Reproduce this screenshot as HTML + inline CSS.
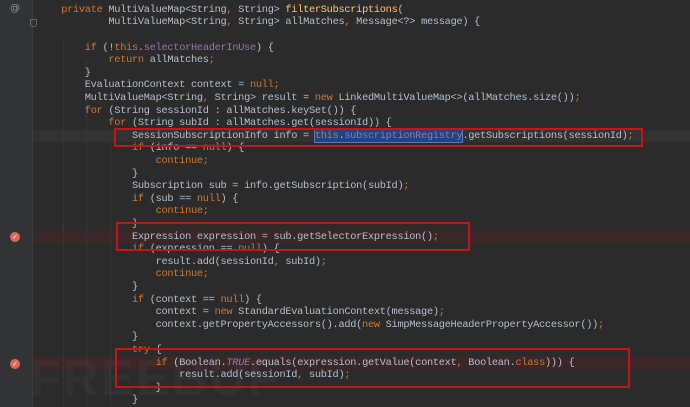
<!DOCTYPE html><html><head><style>
html{height:407px;overflow:hidden;background:#2b2b2b}
body{margin:0;width:690px;height:407px;background:#2b2b2b;overflow:hidden;position:relative;font-family:"Liberation Mono",monospace}
.g{position:absolute;left:0;top:0;width:32px;height:407px;background:#313335;border-right:1px solid #3c3c3c}
.l{position:absolute;left:37.6px;white-space:pre;font-size:10.3px;letter-spacing:-0.28px;line-height:12.6px;color:#b4bfcc;height:12.6px}
.k{color:#cc7832}.f{color:#9876aa}.m{color:#ffc66d}.i{color:#9876aa;font-style:italic}
.sel{background:#214283;outline:1px solid #5a7ab5}
.box{position:absolute;border:2px solid #c81414;box-sizing:border-box}
.bp{position:absolute;left:0;right:0;height:12.6px;background:#3a2828}
.ig{position:absolute;width:1px;background:#363636;bottom:0}
.dot{position:absolute;left:10px;width:10px;height:10px;border-radius:50%;background:#e0645a;color:#fff;font-size:7px;line-height:10px;text-align:center;font-family:"DejaVu Sans",sans-serif}
</style></head><body>
<div style="position:absolute;left:33px;right:0;top:129.5px;height:12.6px;background:#323232"></div>
<div class="bp" style="left:33px;top:230.3px"></div>
<div class="bp" style="left:33px;top:356.3px"></div>
<div class="g"></div>
<div class="ig" style="left:63px;top:40px"></div><div class="ig" style="left:86px;top:60px"></div><div class="ig" style="left:110px;top:140px"></div>
<div style="position:absolute;left:10px;top:3px;color:#999;font-size:10px;font-family:'DejaVu Sans',sans-serif">@</div>
<div style="position:absolute;left:30px;top:19px;width:5px;height:6px;border:1px solid #666;border-radius:0 0 3px 3px"></div>
<div class="dot" style="top:231.5px">✓</div>
<div class="dot" style="top:358.5px">✓</div>
<div style="position:absolute;left:30px;top:350px;height:57px;overflow:hidden;font:bold 50px/57px 'Liberation Sans',sans-serif;color:rgba(255,255,255,0.03);letter-spacing:2px">FREEBUF</div>
<div class="l" style="top:3.7px">    <span class="k">private</span> MultiValueMap&lt;String<span class="k">,</span> String&gt; <span class="m">filterSubscriptions</span>(</div>
<div class="l" style="top:16.3px">            MultiValueMap&lt;String<span class="k">,</span> String&gt; allMatches<span class="k">,</span> Message&lt;?&gt; message) {</div>
<div class="l" style="top:41.5px">        <span class="k">if</span> (!<span class="k">this</span>.<span class="f">selectorHeaderInUse</span>) {</div>
<div class="l" style="top:54.1px">            <span class="k">return</span> allMatches<span class="k">;</span></div>
<div class="l" style="top:66.7px">        }</div>
<div class="l" style="top:79.3px">        EvaluationContext context = <span class="k">null;</span></div>
<div class="l" style="top:91.9px">        MultiValueMap&lt;String<span class="k">,</span> String&gt; result = <span class="k">new</span> LinkedMultiValueMap&lt;&gt;(allMatches.size())<span class="k">;</span></div>
<div class="l" style="top:104.5px">        <span class="k">for</span> (String sessionId : allMatches.keySet()) {</div>
<div class="l" style="top:117.1px">            <span class="k">for</span> (String subId : allMatches.get(sessionId)) {</div>
<div class="l" style="top:129.7px">                SessionSubscriptionInfo info = <span class="sel"><span class="k">this</span>.<span class="f">subscriptionRegistry</span></span>.getSubscriptions(sessionId)<span class="k">;</span></div>
<div class="l" style="top:142.3px">                <span class="k">if</span> (info == <span class="k">null</span>) {</div>
<div class="l" style="top:154.9px">                    <span class="k">continue;</span></div>
<div class="l" style="top:167.5px">                }</div>
<div class="l" style="top:180.1px">                Subscription sub = info.getSubscription(subId)<span class="k">;</span></div>
<div class="l" style="top:192.7px">                <span class="k">if</span> (sub == <span class="k">null</span>) {</div>
<div class="l" style="top:205.3px">                    <span class="k">continue;</span></div>
<div class="l" style="top:217.9px">                }</div>
<div class="l" style="top:230.5px">                Expression expression = sub.getSelectorExpression()<span class="k">;</span></div>
<div class="l" style="top:243.1px">                <span class="k">if</span> (expression == <span class="k">null</span>) {</div>
<div class="l" style="top:255.7px">                    result.add(sessionId<span class="k">,</span> subId)<span class="k">;</span></div>
<div class="l" style="top:268.3px">                    <span class="k">continue;</span></div>
<div class="l" style="top:280.9px">                }</div>
<div class="l" style="top:293.5px">                <span class="k">if</span> (context == <span class="k">null</span>) {</div>
<div class="l" style="top:306.1px">                    context = <span class="k">new</span> StandardEvaluationContext(message)<span class="k">;</span></div>
<div class="l" style="top:318.7px">                    context.getPropertyAccessors().add(<span class="k">new</span> SimpMessageHeaderPropertyAccessor())<span class="k">;</span></div>
<div class="l" style="top:331.3px">                }</div>
<div class="l" style="top:343.9px">                <span class="k">try</span> {</div>
<div class="l" style="top:356.5px">                    <span class="k">if</span> (Boolean.<span class="i">TRUE</span>.equals(expression.getValue(context<span class="k">,</span> Boolean.<span class="k">class</span>))) {</div>
<div class="l" style="top:369.1px">                        result.add(sessionId<span class="k">,</span> subId)<span class="k">;</span></div>
<div class="l" style="top:381.7px">                    }</div>
<div class="l" style="top:394.3px;height:12.7px;overflow:hidden">                }</div>
<div class="box" style="left:114px;top:128px;width:529px;height:19px"></div>
<div class="box" style="left:116px;top:222px;width:354px;height:29px"></div>
<div class="box" style="left:115px;top:348px;width:515px;height:40px"></div>
</body></html>
